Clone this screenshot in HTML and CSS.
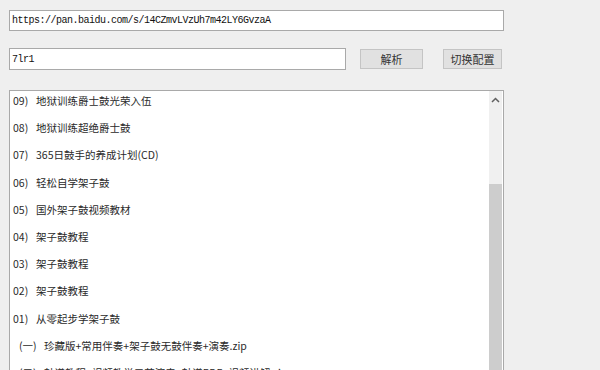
FILE: index.html
```html
<!DOCTYPE html>
<html lang="zh-CN">
<head>
    <meta charset="UTF-8" />
    <title>解析</title>
    <link rel="stylesheet" href="styles.css">
</head>

<body>
    <div class="window">
        <input class="url-box" type="text" value="https://pan.baidu.com/s/14CZmvLVzUh7m42LY6GvzaA" />

        <div class="row">
            <input class="code-box" type="text" value="7lr1" />
            <button class="btn parse">解析</button>
            <button class="btn config">切换配置</button>
        </div>

        <div class="listbox">
            <ul class="items">
                <li><span class="num">09)</span>地狱训练爵士鼓光荣入伍</li>
                <li><span class="num">08)</span>地狱训练超绝爵士鼓</li>
                <li><span class="num">07)</span>365日鼓手的养成计划(CD)</li>
                <li><span class="num">06)</span>轻松自学架子鼓</li>
                <li><span class="num">05)</span>国外架子鼓视频教材</li>
                <li><span class="num">04)</span>架子鼓教程</li>
                <li><span class="num">03)</span>架子鼓教程</li>
                <li><span class="num">02)</span>架子鼓教程</li>
                <li><span class="num">01)</span>从零起步学架子鼓</li>
                <li class="sub"><span class="num">(一)</span>珍藏版+常用伴奏+架子鼓无鼓伴奏+演奏.zip</li>
                <li class="sub"><span class="num">(二)</span>鼓谱教程+视频教学示范演奏+鼓谱PDF+视频讲解.zip</li>
            </ul>
            <div class="scrollbar">
                <div class="arrow">
                    <svg width="9" height="6" viewBox="0 0 9 6">
                        <path d="M1 5 L4.5 1.5 L8 5" fill="none" stroke="#606060" stroke-width="1.5" />
                    </svg>
                </div>
                <div class="track"></div>
                <div class="thumb"></div>
            </div>
        </div>
    </div>
</body>
</html>
```

FILE: styles.css
```css
html, body {
    margin: 0;
    height: 100%;
    overflow: hidden;
}

body {
    background: #efefef;
    font-family: "Noto Sans CJK SC", "Noto Sans", sans-serif;
}

.window {
    display: flex;
    flex-direction: column;
    padding: 10px 0 0 9px;
    width: 495px;
}

input {
    box-sizing: border-box;
    border: 1px solid #a9a9a9;
    background: #fff;
    margin: 0;
    padding: 0 2px;
    outline: none;
    color: #111;
    font-family: "Liberation Mono", monospace;
    font-size: 10px;
    letter-spacing: -0.5px;
}

.url-box {
    width: 495px;
    height: 21px;
}

.row {
    display: flex;
    align-items: flex-start;
    margin-top: 17px;
}

.code-box {
    width: 337px;
    height: 22px;
}

.btn {
    box-sizing: border-box;
    height: 20px;
    margin: 1px 0 0 0;
    padding: 0;
    border: 1px solid #c4c4c4;
    background: #e1e1e1;
    color: #333;
    font-family: "Noto Sans CJK SC", sans-serif;
    font-size: 11px;
    line-height: 18px;
}

.parse {
    width: 63px;
    margin-left: 14px;
}

.config {
    width: 59px;
    margin-left: 20px;
}

.listbox {
    display: flex;
    margin-top: 20px;
    height: 300px;
    border: 1px solid #a9a9a9;
    border-bottom: none;
    background: #fff;
}

.items {
    flex: 1;
    list-style: none;
    margin: 0;
    padding: 0 0 0 3px;
    color: #2a2a2a;
    font-size: 10.5px;
    overflow: hidden;
}

    .items li {
        box-sizing: border-box;
        height: 27.2px;
        padding-top: 3px;
        line-height: 13px;
        white-space: nowrap;
    }

    .items .num {
        display: inline-block;
        width: 23px;
    }

    .items .sub {
        padding-left: 6px;
    }

        .items .sub .num {
            width: 25px;
        }

.scrollbar {
    display: flex;
    flex-direction: column;
    width: 13px;
    margin-right: 1px;
    background: #f0f0f0;
}

.arrow {
    height: 17px;
    display: flex;
    align-items: center;
    justify-content: center;
}

.track {
    height: 76px;
}

.thumb {
    flex: 1;
    background: #cdcdcd;
}
```
